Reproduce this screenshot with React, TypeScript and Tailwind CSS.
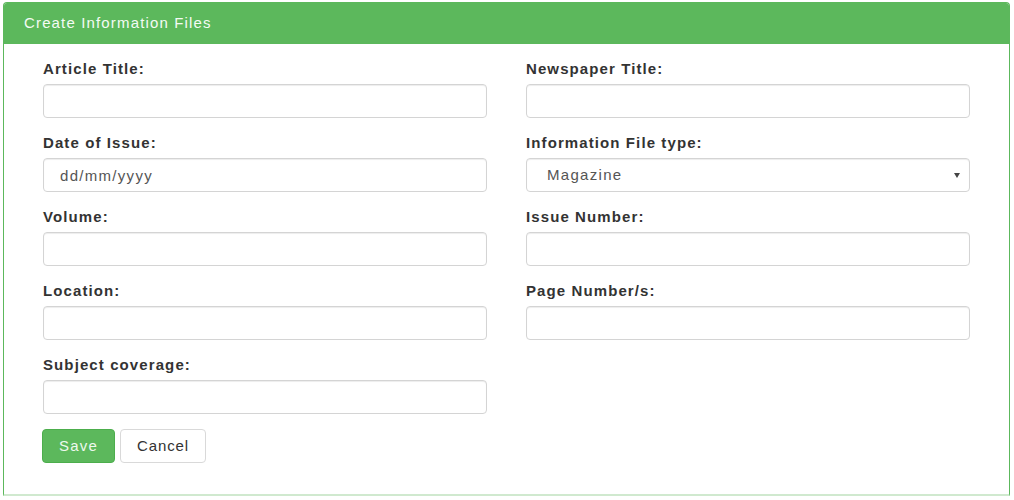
const FIELDS = [
    { id: "article", label: "Article Title:" },
    { id: "newspaper", label: "Newspaper Title:" },
    { id: "date", label: "Date of Issue:", placeholder: "dd/mm/yyyy" },
    { id: "type", label: "Information File type:", select: true },
    { id: "volume", label: "Volume:" },
    { id: "issue", label: "Issue Number:" },
    { id: "location", label: "Location:" },
    { id: "pages", label: "Page Number/s:" },
    { id: "subject", label: "Subject coverage:" },
];

const inputCls =
    "block w-full h-[34px] rounded-[4px] border border-[#d4d4d4] bg-white text-[15px] tracking-[1.3px] text-[#555] shadow-[inset_0_1px_1px_rgba(0,0,0,0.075)] outline-none";

export default function App() {
    return (
        <div className="w-[1014px] h-[500px] bg-white pt-[2px] pl-[3px] font-['Liberation_Sans',Arial,sans-serif]">
            <div className="w-[1007px] h-[494px] flex flex-col border border-[#5cb85c] border-b-[2px] border-b-[#d0e9cf] rounded-t-[4px] overflow-hidden">
                {/* Header */}
                <div className="h-[41px] shrink-0 bg-[#5cb85c] px-[20px] flex items-center text-[15px] tracking-[1.15px] text-[#f4fbf4]">
                    Create Information Files
                </div>

                {/* Body */}
                <div className="pl-[39px] pt-[15px]">
                    <div className="grid grid-cols-[444px_444px] gap-x-[39px] gap-y-[15px]">
                        {FIELDS.map((f) => (
                            <div key={f.id}>
                                <label className="block h-[20px] leading-[20px] mb-[5px] text-[15px] font-bold tracking-[1.1px] text-[#333]">
                                    {f.label}
                                </label>
                                {f.select ? (
                                    <div className="relative">
                                        <select className={`${inputCls} appearance-none pl-[20px]`} defaultValue="Magazine">
                                            <option>Magazine</option>
                                            <option>Newspaper</option>
                                            <option>Journal</option>
                                        </select>
                                        <span className="absolute right-[10px] top-[15px] w-0 h-0 border-l-[3.5px] border-r-[3.5px] border-t-[5px] border-l-transparent border-r-transparent border-t-[#444]" />
                                    </div>
                                ) : (
                                    <input
                                        type="text"
                                        placeholder={f.placeholder}
                                        className={`${inputCls} px-[16px] placeholder:text-[#555]`}
                                    />
                                )}
                            </div>
                        ))}
                    </div>

                    {/* Actions */}
                    <div className="flex gap-[5px] mt-[15px] -ml-[1px]">
                        <button className="h-[34px] px-[16px] rounded-[4px] border border-[#4cae4c] bg-[#5cb85c] text-[15px] tracking-[1.2px] text-[#eef8ee]">
                            Save
                        </button>
                        <button className="h-[34px] px-[16px] rounded-[4px] border border-[#d9d9d9] bg-white text-[15px] tracking-[0.9px] text-[#333]">
                            Cancel
                        </button>
                    </div>
                </div>
            </div>
        </div>
    );
}
